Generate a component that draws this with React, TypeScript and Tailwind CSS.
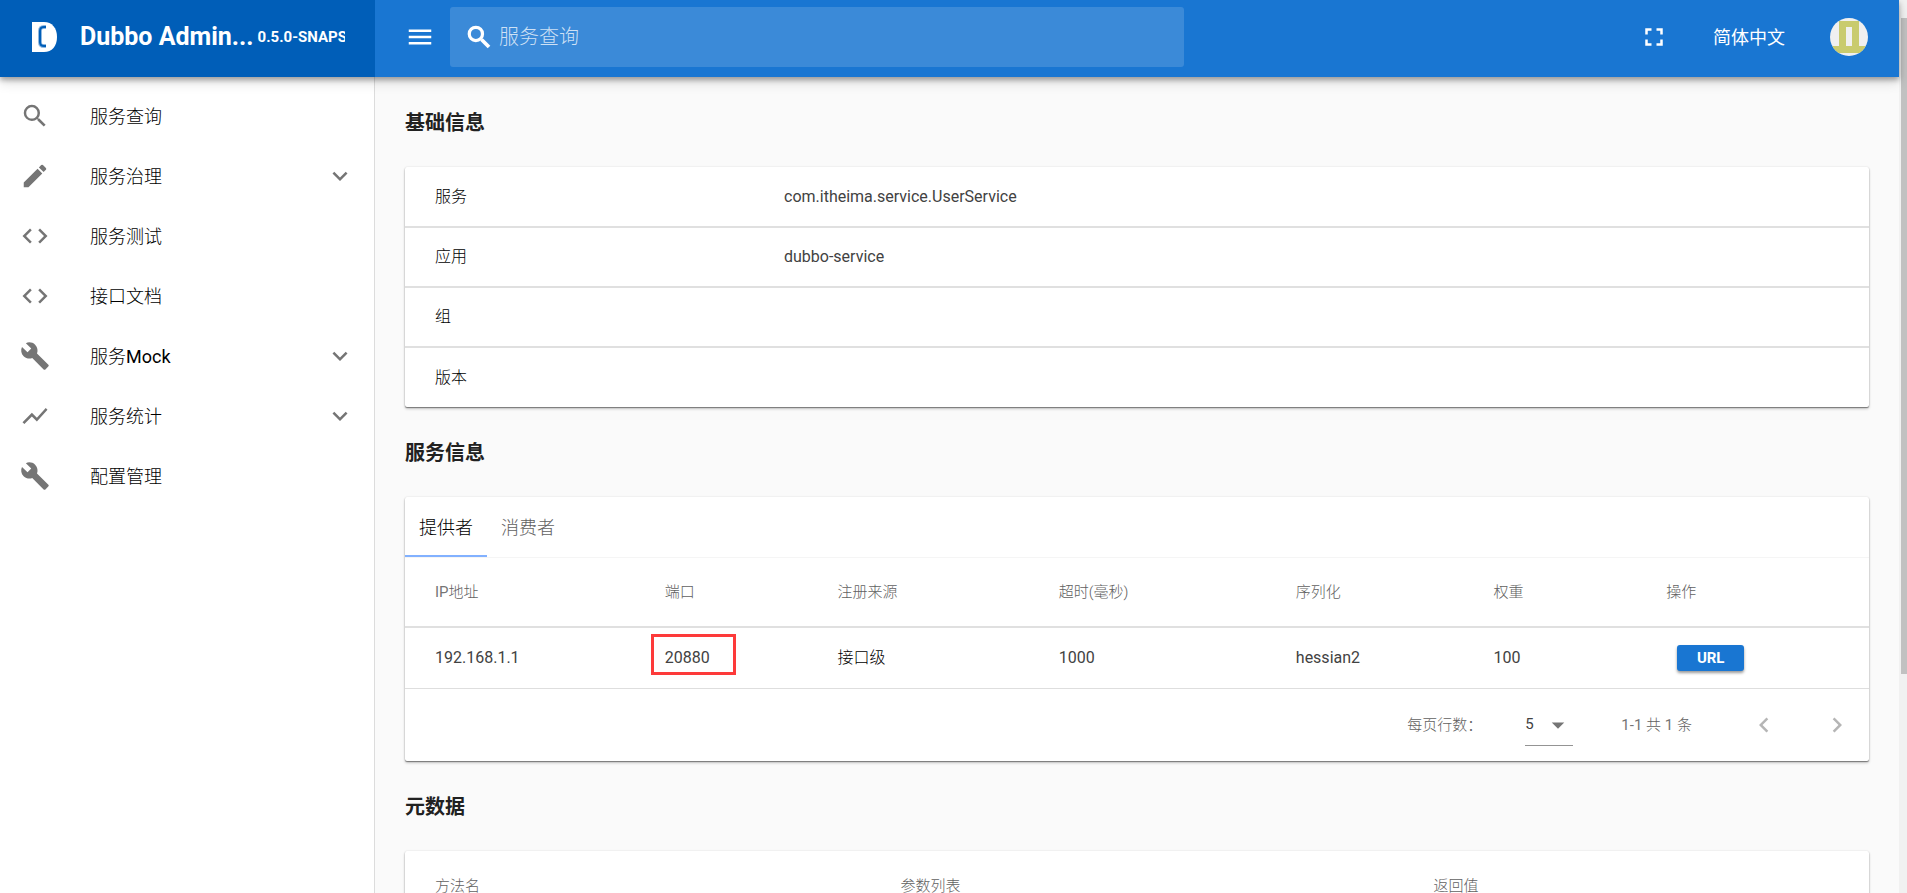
import React, { useState } from 'react';
import {
  MdCode,
  MdCreate,
  MdBuild,
  MdFullscreen,
  MdKeyboardArrowDown,
  MdMenu,
  MdSearch,
  MdChevronLeft,
  MdChevronRight,
  MdShowChart,
  MdArrowDropDown,
} from 'react-icons/md';

interface MenuItem {
  title: string;
  icon: React.ReactNode;
  group?: boolean;
}

interface Provider {
  address: string;
  port: number;
  registry: string;
  timeout: number;
  serialization: string;
  weight: number;
}

const menuItems: MenuItem[] = [
  { title: '服务查询', icon: <MdSearch size={30} /> },
  { title: '服务治理', icon: <MdCreate size={30} />, group: true },
  { title: '服务测试', icon: <MdCode size={30} /> },
  { title: '接口文档', icon: <MdCode size={30} /> },
  { title: '服务Mock', icon: <MdBuild size={30} />, group: true },
  { title: '服务统计', icon: <MdShowChart size={30} />, group: true },
  { title: '配置管理', icon: <MdBuild size={30} /> },
];

const basicInfo = [
  { label: '服务', value: 'com.itheima.service.UserService' },
  { label: '应用', value: 'dubbo-service' },
  { label: '组', value: '' },
  { label: '版本', value: '' },
];

const providers: Provider[] = [
  {
    address: '192.168.1.1',
    port: 20880,
    registry: '接口级',
    timeout: 1000,
    serialization: 'hessian2',
    weight: 100,
  },
];

const cardShadow =
  'shadow-[0_1px_1px_rgba(0,0,0,0.4),0_2px_3px_rgba(0,0,0,0.2),0_0_2px_rgba(0,0,0,0.12)]';

const Logo = () => (
  <svg viewBox="0 0 27 30" className="h-[30px] w-[27px] shrink-0" aria-hidden="true">
    <path d="M1 0h12c8 0 13 6 13 15s-5 15-13 15H1z" fill="#fff" />
    <path d="M15 5h-2c-3 0-4 1-4 4v11c0 3 1 4 4 4h2" fill="none" stroke="#8fb8e0" strokeWidth="4" />
    <path d="M15 5h-2c-3 0-4 1-4 4v11c0 3 1 4 4 4h2" fill="none" stroke="#005eb8" strokeWidth="2" />
  </svg>
);

const BoldSearchIcon = () => (
  <svg viewBox="0 0 24 24" className="h-[30px] w-[30px] shrink-0" fill="none" aria-hidden="true">
    <circle cx="9.5" cy="9.5" r="5.3" stroke="#fff" strokeWidth="2.6" />
    <path d="M14 14l6 6" stroke="#fff" strokeWidth="3" />
  </svg>
);

const Avatar = () => (
  <svg viewBox="0 0 38 38" className="h-[38px] w-[38px]" aria-hidden="true">
    <defs>
      <clipPath id="avatar-clip">
        <circle cx="19" cy="19" r="19" />
      </clipPath>
    </defs>
    <g clipPath="url(#avatar-clip)">
      <rect width="38" height="38" fill="#f0f0f0" />
      <path d="M9 3h20v25h9v7H0v-7h9zM16 9v19h6V9z" fill="#c9cb6e" fillRule="evenodd" />
    </g>
  </svg>
);

const Sidebar = () => (
  <aside className="w-[375px] shrink-0 border-r border-[#dcdcdc] bg-white pt-[9px]">
    <nav>
      <ul>
        {menuItems.map((item) => (
          <li key={item.title}>
            <a href="#" className="flex h-15 items-center pr-[19px] pl-5 text-[18px] text-[#212121]">
              <span className="w-[70px] shrink-0 text-[#757575]">{item.icon}</span>
              <span className="flex-1 font-light text-black">
                {item.title.replace('Mock', '')}
                {item.title.endsWith('Mock') && <span className="font-normal">Mock</span>}
              </span>
              {item.group && <MdKeyboardArrowDown size={30} className="text-[#757575]" />}
            </a>
          </li>
        ))}
      </ul>
    </nav>
  </aside>
);

const Header = () => (
  <header className="relative z-10 flex h-[77px] bg-[#1976d2] text-white shadow-[0_3px_5px_rgba(0,0,0,0.3),0_5px_12px_rgba(0,0,0,0.14)]">
    <div className="flex w-[375px] shrink-0 items-center bg-[#005eb8] pr-[30px] pl-[31px] pb-[3px]">
      <Logo />
      <h1 className="ml-[22px] flex min-w-0 items-center overflow-hidden whitespace-nowrap text-[25px] font-bold">
        Dubbo Admin...
        <span className="pl-1 text-[15px]">0.5.0-SNAPSHOT</span>
      </h1>
    </div>
    <div className="flex flex-1 items-center pr-[31px] pb-[3px]">
      <button type="button" className="ml-[30px]" aria-label="菜单">
        <MdMenu size={30} />
      </button>
      <label className="ml-[15px] flex h-15 w-[734px] items-center rounded-[3px] bg-white/15 pl-[14px]">
        <BoldSearchIcon />
        <input
          type="text"
          aria-label="服务查询"
          placeholder="服务查询"
          className="ml-[5px] flex-1 bg-transparent text-[20px] font-light outline-none placeholder:text-white/75"
        />
      </label>
      <button type="button" className="ml-auto" aria-label="全屏">
        <MdFullscreen size={30} />
      </button>
      <button type="button" className="ml-11 text-[18px]">
        简体中文
      </button>
      <button type="button" className="ml-[45px]" aria-label="用户">
        <Avatar />
      </button>
    </div>
  </header>
);

const SectionTitle = ({ children }: { children: React.ReactNode }) => (
  <h2 className="flex h-[90px] items-center pt-[2px] text-[20px] font-bold text-[#212121]">{children}</h2>
);

const BasicInfo = () => (
  <table className={`w-full table-fixed rounded-[2px] bg-white text-[16px] ${cardShadow}`}>
    <tbody>
      {basicInfo.map((row) => (
        <tr key={row.label} className="h-15 border-b-2 border-[#e0e0e0] last:border-b-0">
          <th scope="row" className="w-[349px] pl-[30px] text-left font-light text-black">
            {row.label}
          </th>
          <td className="pl-[30px] text-[#424242]">{row.value}</td>
        </tr>
      ))}
    </tbody>
  </table>
);

const ServiceInfo = () => {
  const [tab, setTab] = useState('提供者');

  return (
    <div className={`rounded-[2px] bg-white ${cardShadow}`}>
      <div role="tablist" className="flex h-15 text-[18px] font-light">
        {['提供者', '消费者'].map((name) => (
          <button
            key={name}
            type="button"
            role="tab"
            aria-selected={tab === name}
            onClick={() => setTab(name)}
            className={`border-b-2 px-[14px] pt-[2px] ${
              tab === name ? 'border-[#82b1ff] text-black' : 'border-transparent text-[#616161]'
            }`}
          >
            {name}
          </button>
        ))}
      </div>
      <table className="w-full table-fixed border-t border-[#f5f5f5] text-left text-[16px]">
        <thead className="text-[15px] text-[#616161]">
          <tr className="h-[69px] border-b-2 border-[#e0e0e0]">
            <th className="w-[15.7%] pl-[30px] font-light">
              <span className="font-normal text-[#757575]">IP</span>地址
            </th>
            <th className="w-[11.8%] pl-[30px] font-light">端口</th>
            <th className="w-[15.1%] pl-[30px] font-light">注册来源</th>
            <th className="w-[16.2%] pl-[30px] font-light">超时(毫秒)</th>
            <th className="w-[13.5%] pl-[30px] font-light">序列化</th>
            <th className="w-[11.8%] pl-[30px] font-light">权重</th>
            <th className="pl-[30px] font-light">操作</th>
          </tr>
        </thead>
        <tbody className="text-[#424242]">
          {providers.map((p) => (
            <tr key={p.address} className="h-[62px] border-b border-[#dedede]">
              <td className="pl-[30px]">{p.address}</td>
              <td className="pl-[30px]">
                <span className="relative">
                  {p.port}
                  <span className="absolute -top-[14px] -left-[14px] h-[41px] w-[85px] border-3 border-[#fd3a3a]" />
                </span>
              </td>
              <td className="pl-[30px] font-light text-black">{p.registry}</td>
              <td className="pl-[30px]">{p.timeout}</td>
              <td className="pl-[30px]">{p.serialization}</td>
              <td className="pl-[30px]">{p.weight}</td>
              <td className="pl-[41px]">
                <button
                  type="button"
                  className="block h-[26px] w-[67px] rounded-[3px] bg-[#1976d2] text-[15px] font-bold text-white shadow-[0_2px_3px_rgba(0,0,0,0.4)]"
                >
                  URL
                </button>
              </td>
            </tr>
          ))}
        </tbody>
      </table>
      <div className="flex h-[72px] items-center justify-end pr-[17px] text-[15px] text-[#757575]">
        <label htmlFor="page-size" className="font-light text-[#616161]">
          每页行数：
        </label>
        <div className="relative ml-[43px] flex h-[42px] w-12 items-center border-b border-[#949494]">
          <select id="page-size" className="w-full appearance-none text-[#424242] outline-none">
            <option>5</option>
          </select>
          <MdArrowDropDown size={30} className="pointer-events-none absolute right-0" />
        </div>
        <span className="ml-[48px]">
          1-1 <span className="font-light text-[#616161]">共</span> 1{' '}
          <span className="font-light text-[#616161]">条</span>
        </span>
        <button type="button" disabled className="ml-[57px] text-[#b5b5b5]" aria-label="上一页">
          <MdChevronLeft size={30} />
        </button>
        <button type="button" disabled className="ml-[43px] text-[#b5b5b5]" aria-label="下一页">
          <MdChevronRight size={30} />
        </button>
      </div>
    </div>
  );
};

const Metadata = () => (
  <table className={`w-full table-fixed rounded-[2px] bg-white text-left text-[15px] text-[#616161] ${cardShadow}`}>
    <thead>
      <tr className="h-[70px]">
        <th className="w-[31.8%] pl-[30px] font-light">方法名</th>
        <th className="w-[36.4%] pl-[30px] font-light">参数列表</th>
        <th className="pl-[30px] font-light">返回值</th>
      </tr>
    </thead>
  </table>
);

export default function App() {
  return (
    <div className="flex h-screen overflow-hidden bg-[#fafafa] font-[Roboto,'Noto_Sans_CJK_SC',sans-serif] text-[#212121]">
      <div className="flex min-w-0 flex-1 flex-col">
        <Header />
        <div className="flex min-h-0 flex-1">
          <Sidebar />
          <main className="min-w-0 flex-1 overflow-hidden px-[30px]">
            <SectionTitle>基础信息</SectionTitle>
            <BasicInfo />
            <SectionTitle>服务信息</SectionTitle>
            <ServiceInfo />
            <SectionTitle>元数据</SectionTitle>
            <Metadata />
          </main>
        </div>
      </div>
      <div className="w-2 shrink-0 bg-[#f1f1f1] pt-[18px] pl-[2px]">
        <div className="h-3/4 bg-[#c1c1c1]" />
      </div>
    </div>
  );
}
